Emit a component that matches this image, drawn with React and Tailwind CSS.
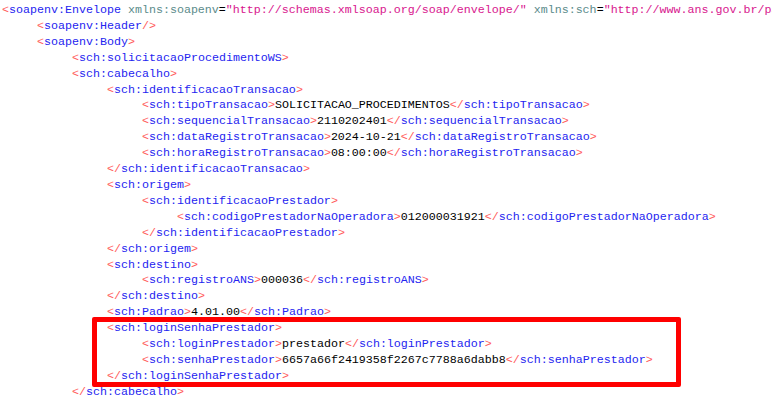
const LINES = [
  [0, 'open', 'soapenv:Envelope', [['xmlns:soapenv', 'http://schemas.xmlsoap.org/soap/envelope/'], ['xmlns:sch', 'http://www.ans.gov.br/padroes/tiss/schemas']]],
  [1, 'empty', 'soapenv:Header'],
  [1, 'open', 'soapenv:Body'],
  [2, 'open', 'sch:solicitacaoProcedimentoWS'],
  [2, 'open', 'sch:cabecalho'],
  [3, 'open', 'sch:identificacaoTransacao'],
  [4, 'leaf', 'sch:tipoTransacao', 'SOLICITACAO_PROCEDIMENTOS'],
  [4, 'leaf', 'sch:sequencialTransacao', '2110202401'],
  [4, 'leaf', 'sch:dataRegistroTransacao', '2024-10-21'],
  [4, 'leaf', 'sch:horaRegistroTransacao', '08:00:00'],
  [3, 'close', 'sch:identificacaoTransacao'],
  [3, 'open', 'sch:origem'],
  [4, 'open', 'sch:identificacaoPrestador'],
  [5, 'leaf', 'sch:codigoPrestadorNaOperadora', '012000031921'],
  [4, 'close', 'sch:identificacaoPrestador'],
  [3, 'close', 'sch:origem'],
  [3, 'open', 'sch:destino'],
  [4, 'leaf', 'sch:registroANS', '000036'],
  [3, 'close', 'sch:destino'],
  [3, 'leaf', 'sch:Padrao', '4.01.00'],
  [3, 'open', 'sch:loginSenhaPrestador'],
  [4, 'leaf', 'sch:loginPrestador', 'prestador'],
  [4, 'leaf', 'sch:senhaPrestador', '6657a66f2419358f2267c7788a6dabb8'],
  [3, 'close', 'sch:loginSenhaPrestador'],
  [2, 'close', 'sch:cabecalho'],
]

// indent per level in px, level 0 sits at 2px
const PAD = ['pl-[2px]', 'pl-[37px]', 'pl-[72px]', 'pl-[107px]', 'pl-[142px]', 'pl-[177px]']

const B = ({ children }) => <span className="text-[#ff5a5a]">{children}</span>
const N = ({ children }) => <span className="text-[#2424f0]">{children}</span>

function Tag({ name, close, empty, attrs }) {
  return (
    <>
      <B>{close ? '</' : '<'}</B>
      <N>{name}</N>
      {attrs && attrs.map(([k, v]) => (
        <span key={k}>
          {' '}
          <span className="text-[#5b8b8b]">{k}</span>
          <span className="text-black">=</span>
          <span className="text-[#d8168e]">"{v}"</span>
        </span>
      ))}
      <B>{empty ? '/>' : '>'}</B>
    </>
  )
}

function Line({ level, kind, name, extra }) {
  return (
    <div className={`h-[15.92px] whitespace-pre ${PAD[level]}`}>
      {kind === 'open' && <Tag name={name} attrs={Array.isArray(extra) ? extra : null} />}
      {kind === 'empty' && <Tag name={name} empty />}
      {kind === 'close' && <Tag name={name} close />}
      {kind === 'leaf' && (
        <>
          <Tag name={name} />
          <span className="text-black">{extra}</span>
          <Tag name={name} close />
        </>
      )}
    </div>
  )
}

export default function App() {
  return (
    <div className="relative w-[772px] h-[401px] overflow-hidden bg-white pt-[3px] font-['Liberation_Mono','Courier_New',monospace] text-[11.67px] leading-[15.92px]">
      {LINES.map(([level, kind, name, extra], i) => (
        <Line key={i} level={level} kind={kind} name={name} extra={extra} />
      ))}
      <div className="absolute left-[92px] top-[317px] w-[589px] h-[70px] border-[5px] border-[#ff0000] rounded-[2px]" />
    </div>
  )
}
